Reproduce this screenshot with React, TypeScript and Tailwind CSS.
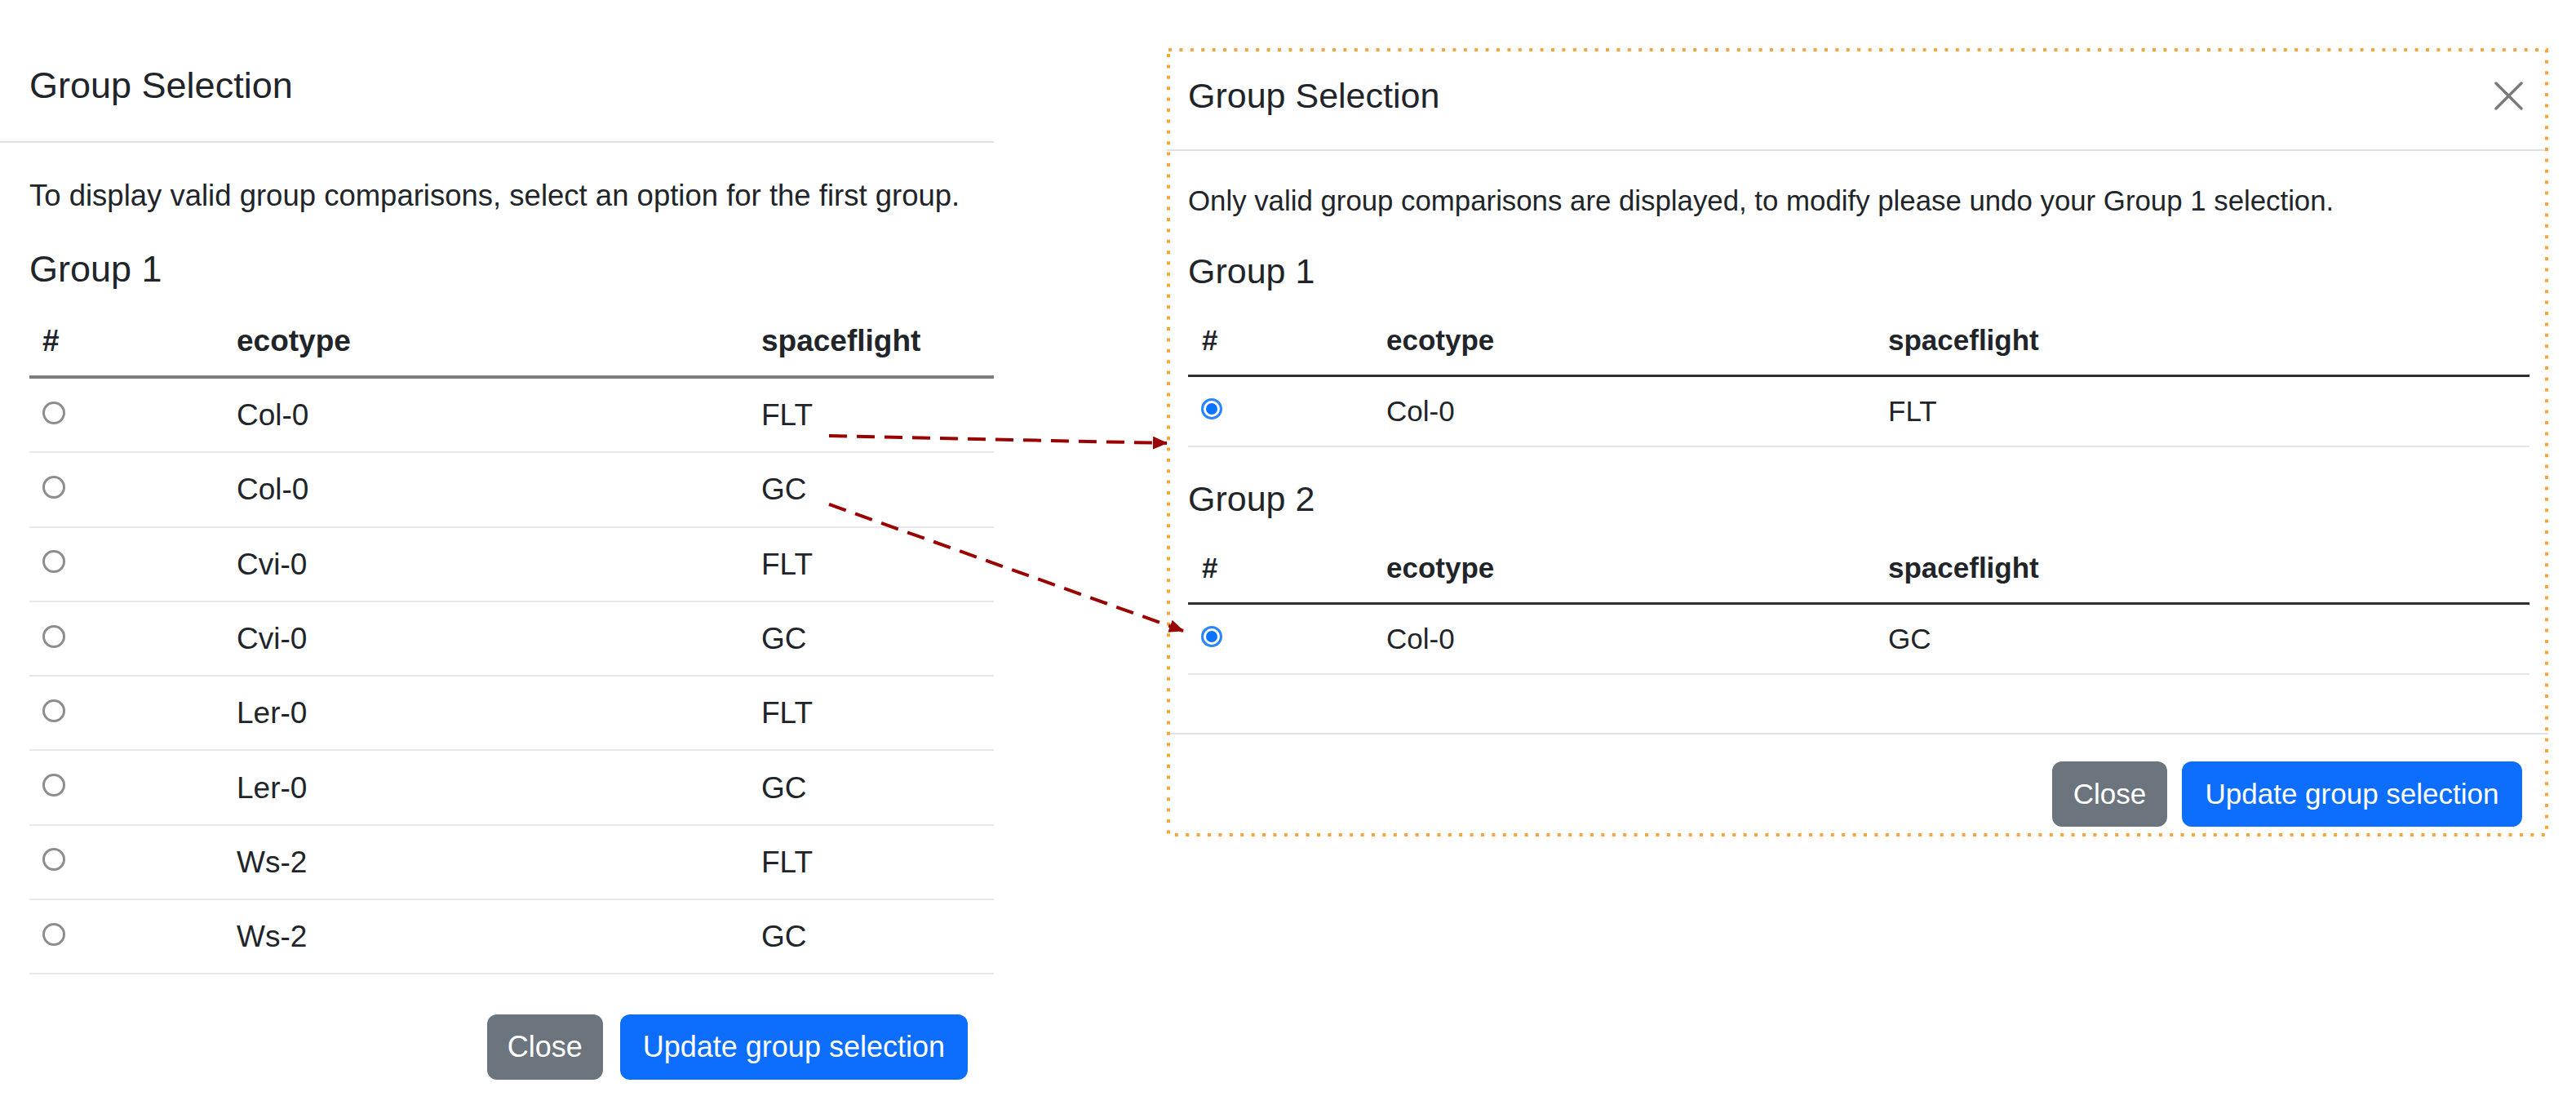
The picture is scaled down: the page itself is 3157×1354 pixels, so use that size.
type Row = { ecotype: string; flight: string };

const allRows: Row[] = [
  { ecotype: 'Col-0', flight: 'FLT' },
  { ecotype: 'Col-0', flight: 'GC' },
  { ecotype: 'Cvi-0', flight: 'FLT' },
  { ecotype: 'Cvi-0', flight: 'GC' },
  { ecotype: 'Ler-0', flight: 'FLT' },
  { ecotype: 'Ler-0', flight: 'GC' },
  { ecotype: 'Ws-2', flight: 'FLT' },
  { ecotype: 'Ws-2', flight: 'GC' },
];

function EmptyRadio() {
  return <span className="block w-[28px] h-[28px] rounded-full border-[3px] border-[#8d8d8d] bg-white" />;
}

function CheckedRadio() {
  return (
    <span className="block w-[26px] h-[26px] rounded-full border-[3px] border-[#2a86ff] p-[3px] bg-white">
      <span className="block w-full h-full rounded-full bg-[#0b73ff]" />
    </span>
  );
}

function LeftModal() {
  return (
    <div className="w-[1218px] shrink-0 flex flex-col">
      <div className="pt-[78px] pb-[42px] pl-[36px] border-b-2 border-[#dee2e6]">
        <h5 className="text-[45px] leading-[53px]">Group Selection</h5>
      </div>
      <div className="pl-[36px] pt-[37px]">
        <p className="text-[36.5px] leading-[55px] mb-[36px]">
          To display valid group comparisons, select an option for the first group.
        </p>
        <h5 className="text-[45px] leading-[53px] mb-[18px]">Group 1</h5>
        <div className="text-[37px] leading-[55px]">
          <div className="grid grid-cols-[238px_643px_1fr] h-[90px] items-center border-b-4 border-[#7d7d7d] font-bold">
            <div className="pl-[16px]">#</div>
            <div className="pl-[16px]">ecotype</div>
            <div className="pl-[16px]">spaceflight</div>
          </div>
          {allRows.map((r, i) => (
            <div key={i} className="grid grid-cols-[238px_643px_1fr] h-[91.3px] items-center border-b-2 border-[#e6e8eb]">
              <div className="pl-[16px] -mt-[6px]">
                <EmptyRadio />
              </div>
              <div className="pl-[16px]">{r.ecotype}</div>
              <div className="pl-[16px]">{r.flight}</div>
            </div>
          ))}
        </div>
      </div>
      <div className="flex justify-end gap-[21px] pr-[32px] pt-[49px]">
        <button className="h-[80px] px-[25px] rounded-[12px] bg-[#6c757d] text-white text-[36px]">Close</button>
        <button className="h-[80px] px-[28px] rounded-[12px] bg-[#0d6efd] text-white text-[36px]">
          Update group selection
        </button>
      </div>
    </div>
  );
}

function GroupTable({ title, row }: { title: string; row: Row }) {
  return (
    <div className="mb-[37px]">
      <h5 className="text-[43px] leading-[52px] mb-[17px]">{title}</h5>
      <div className="text-[35px] leading-[52px]">
        <div className="grid grid-cols-[226px_615px_1fr] h-[87px] items-center border-b-[3px] border-[#2b2f33] font-bold">
          <div className="pl-[17px]">#</div>
          <div className="pl-[17px]">ecotype</div>
          <div className="pl-[17px]">spaceflight</div>
        </div>
        <div className="grid grid-cols-[226px_615px_1fr] h-[86px] items-center border-b-2 border-[#e3e6ea]">
          <div className="pl-[16px] -mt-[6px]">
            <CheckedRadio />
          </div>
          <div className="pl-[17px]">{row.ecotype}</div>
          <div className="pl-[17px]">{row.flight}</div>
        </div>
      </div>
    </div>
  );
}

function RightModal() {
  return (
    <div className="relative ml-[212px] mt-[59px] w-[1693px] h-[966px] flex flex-col">
      <div className="flex items-center justify-between pt-[32px] pb-[40px] pl-[26px] pr-[31px] border-b-2 border-[#dee2e6]">
        <h5 className="text-[43px] leading-[52px]">Group Selection</h5>
        <svg width="35" height="35" viewBox="0 0 35 35">
          <path d="M2 2 L33 33 M33 2 L2 33" stroke="#7a7a7a" strokeWidth="3.5" strokeLinecap="round" />
        </svg>
      </div>
      <div className="pl-[26px] pr-[23px] pt-[35px] pb-[34px] border-b-2 border-[#dee2e6]">
        <p className="text-[34.8px] leading-[52px] mb-[34px]">
          Only valid group comparisons are displayed, to modify please undo your Group 1 selection.
        </p>
        <GroupTable title="Group 1" row={{ ecotype: 'Col-0', flight: 'FLT' }} />
        <GroupTable title="Group 2" row={{ ecotype: 'Col-0', flight: 'GC' }} />
      </div>
      <div className="flex justify-end gap-[18px] pr-[32px] pt-[33px]">
        <button className="h-[80px] w-[141px] rounded-[12px] bg-[#6c757d] text-white text-[35px]">Close</button>
        <button className="h-[80px] w-[417px] rounded-[12px] bg-[#0d6efd] text-white text-[35px]">
          Update group selection
        </button>
      </div>
      {/* annotation frame */}
      <svg className="absolute inset-0 pointer-events-none" width="1693" height="966">
        <rect
          x="2"
          y="2"
          width="1689"
          height="962"
          fill="none"
          stroke="#f8a63a"
          strokeWidth="4"
          strokeDasharray="4 9.4"
        />
      </svg>
    </div>
  );
}

export default function App() {
  return (
    <div className="relative w-[3157px] h-[1354px] overflow-hidden bg-white flex items-start font-['Liberation_Sans',Arial,sans-serif] text-[#212529]">
      <LeftModal />
      <RightModal />
      <svg className="absolute inset-0 pointer-events-none" width="3157" height="1354">
        <defs>
          <marker id="head" markerWidth="18" markerHeight="16" refX="17" refY="8" orient="auto" markerUnits="userSpaceOnUse">
            <path d="M0 0 L18 8 L0 16 Z" fill="#990000" />
          </marker>
        </defs>
        <line x1="1016" y1="534" x2="1430" y2="543" stroke="#990000" strokeWidth="4" strokeDasharray="22 12" markerEnd="url(#head)" />
        <line x1="1016" y1="618" x2="1450" y2="773" stroke="#990000" strokeWidth="4" strokeDasharray="22 12" markerEnd="url(#head)" />
      </svg>
    </div>
  );
}
